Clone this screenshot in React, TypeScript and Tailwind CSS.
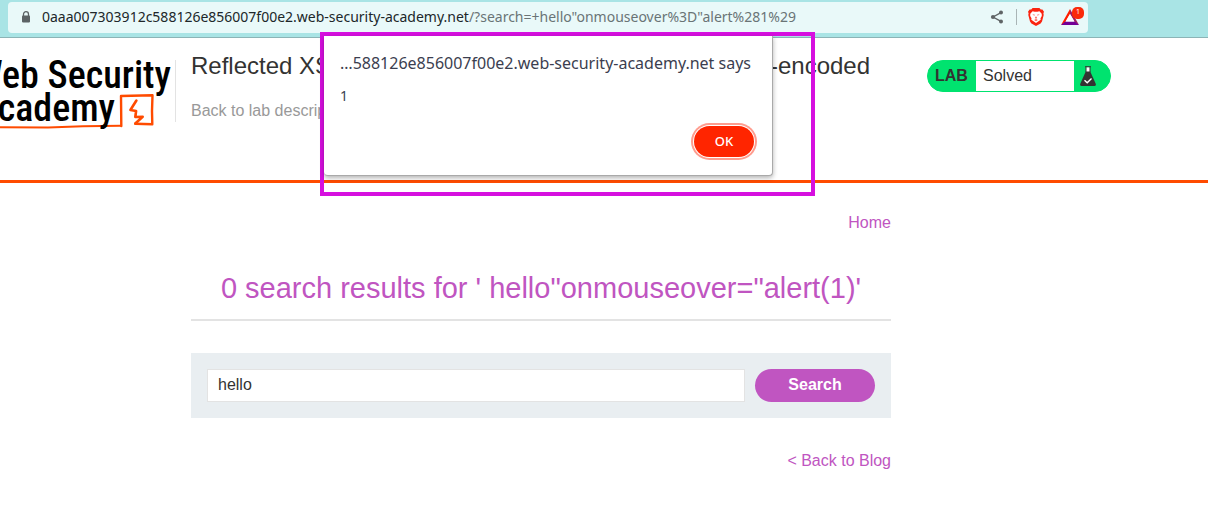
import React from "react";

function LockIcon() {
  return (
    <svg viewBox="0 0 10 12" className="h-3 w-[10px] shrink-0" aria-hidden="true">
      <path d="M2.5 5V3.2a2.5 2.5 0 0 1 5 0V5" fill="none" stroke="#5b6365" strokeWidth="1.3" />
      <rect x="1" y="4.4" width="8" height="7" rx="0.8" fill="#5b6365" />
    </svg>
  );
}

function ShareIcon() {
  return (
    <svg viewBox="0 0 14 14" className="h-[14px] w-[14px]" aria-hidden="true">
      <path d="M11 2.6 3 7l8 4.4" fill="none" stroke="#5f6466" strokeWidth="1.3" />
      <circle cx="11" cy="2.6" r="2" fill="#5f6466" />
      <circle cx="3" cy="7" r="2.1" fill="#5f6466" />
      <circle cx="11" cy="11.4" r="2" fill="#5f6466" />
    </svg>
  );
}

function LionIcon() {
  return (
    <svg viewBox="0 0 16 18" className="h-[18px] w-4" aria-hidden="true">
      <path d="M4.6 0h6.800l1.400 1.600 1.600-.1L16 3.700l-.6 1.600.3 1.600-1.700 6.600-1.400 2.100L8 18l-4.600-2.400L2 13.500.3 6.900l.3-1.600L0 3.700l1.600-2.200 1.600.1z" fill="#fb2410" />
      <path d="m4.600 3.200 2 .5h2.800l2-.5 2.300 2.500.1 2.300-1.300 2.200.2 1.500L8 15l-4.700-3.300.2-1.500L2.200 8l.1-2.300z" fill="#fff" />
      <path d="m4.300 6.200 2.700.6-.8 1zM11.700 6.200 9 6.800l.8 1zM7.700 8.400h.6l.9 1.500L8 10.700l-1.200-.8zM6.100 12 8 11.100l1.900.9L8 13.300z" fill="#fb2410" opacity=".7" />
    </svg>
  );
}

function RewardsIcon() {
  return (
    <svg viewBox="0 0 18 16" className="h-4 w-[18px]" aria-hidden="true">
      <path d="M9 0 0 16l4.200-2.800L9 5z" fill="#ff1e00" />
      <path d="M9 0v5l4.800 8.200L18 16z" fill="#9e1f63" />
      <path d="m0 16 4.200-3.600h9.600L18 16z" fill="#720096" />
      <path d="M9 5 4.600 12.500h8.800z" fill="#fff" />
    </svg>
  );
}

function FlaskIcon() {
  return (
    <svg viewBox="0 0 16 20" className="h-5 w-4" aria-hidden="true">
      <path d="M6 1.200h4V6H6z" fill="#fff" />
      <path d="M5 .7h6M6 1v5M10 1v5" fill="none" stroke="#333332" strokeWidth="1" />
      <path d="M5.700 5.500h4.600L15.800 18q.4 2-1.500 2H1.700q-1.900 0-1.500-2z" fill="#333332" />
      <path d="m4.500 14.300 2.700 2.400 4.300-4.100" fill="none" stroke="#fff" strokeWidth="1.400" />
    </svg>
  );
}

function AcademyLogo() {
  return (
    <a
      href="#academy"
      aria-label="Web Security Academy"
      className="relative block h-[72px] w-[171px] shrink-0 overflow-hidden"
    >
      <svg viewBox="0 0 171 72" className="absolute inset-0 h-[72px] w-[171px]" fill="none" stroke="#ff4b00" aria-hidden="true">
        <path d="M0 69.200 48 69.600 83 68.200 121 67.800" strokeWidth="2" />
        <path d="M121.300 68 121 38l31.500-.8-.5 15.800.3 13.200-17-.4" strokeWidth="2.400" strokeLinejoin="round" strokeLinecap="round" />
        <path d="m136.400 42.500-6 9.500 5.700 1-.8 6 7.400-.2-7.400 6.700" strokeWidth="2.600" strokeLinejoin="round" strokeLinecap="round" />
      </svg>
      <span className="relative flex flex-col items-end pt-px font-['Roboto_Condensed','Open_Sans_Condensed','Noto_Sans_Condensed','Roboto',sans-serif] text-[38px] leading-[33px] font-medium whitespace-nowrap text-black">
        <span>Web Security</span>
        <span className="pr-14">Academy</span>
      </span>
    </a>
  );
}

function AddressBar() {
  return (
    <div className="flex h-[38px] border-b border-[#8cb4b6] bg-[#a9e4e5] pt-[2px] pr-[120px] pb-1 pl-2 font-['Noto_Sans',sans-serif]">
      <div className="flex min-w-0 grow items-center rounded-[4px] bg-[#e9f9f9] pr-[5px] pb-[2px] pl-[13px]">
        <LockIcon />
        <p className="ml-[11px] grow truncate text-sm text-[#6a7476]">
          <span className="text-[#202729]">0aaa007303912c588126e856007f00e2.web-security-academy.net</span>
          /?search=+hello"onmouseover%3D"alert%281%29
        </p>
        <button type="button" aria-label="Share"><ShareIcon /></button>
        <span className="mr-[11px] ml-3 h-4 w-px bg-[#a9b5b6]" />
        <button type="button" aria-label="Shields"><LionIcon /></button>
        <button type="button" aria-label="Rewards" className="relative ml-[17px] pr-1">
          <RewardsIcon />
          <span className="absolute -top-[2px] -right-[1px] flex h-3 w-3 items-center justify-center rounded-[5px] bg-[#fb2a0a] text-[7px] text-white">1</span>
        </button>
      </div>
    </div>
  );
}

function LabStatus() {
  return (
    <div className="ml-auto flex h-8 w-[184px] shrink-0 overflow-hidden rounded-full border border-[#00e36f] bg-[#00e36f] text-base leading-[30px] text-[#333332]">
      <span className="w-12 pl-[7px] font-bold">LAB</span>
      <span className="grow bg-white pl-[7px]">Solved</span>
      <span className="flex w-9 items-center pl-[6px]"><FlaskIcon /></span>
    </div>
  );
}

function AlertDialog() {
  return (
    <div
      role="dialog"
      aria-label="Page alert"
      className="flex h-full w-[449px] flex-col rounded-b-[4px] border-r border-b border-[#a9a9a9] bg-white px-4 pt-4 pb-4 font-['Noto_Sans',sans-serif] text-[#3b3e4f] shadow-[0_2px_5px_rgba(0,0,0,0.3)]"
    >
      <p className="text-base leading-[22px] whitespace-nowrap">…588126e856007f00e2.web-security-academy.net says</p>
      <p className="mt-3 text-sm leading-5">1</p>
      <button
        type="button"
        className="mt-auto mr-[2px] mb-[2px] h-[31px] w-[60px] self-end rounded-full bg-[#ff2500] text-[13px] font-medium text-white ring-2 ring-[#ff9c8e] ring-offset-1"
      >
        OK
      </button>
    </div>
  );
}

export default function App() {
  return (
    <div className="relative min-h-screen overflow-hidden bg-white font-['Liberation_Sans',Arial,sans-serif] text-base text-[#333332]">
      <AddressBar />

      <header className="flex h-[145px] items-start border-b-[3px] border-[#ff4b00] pr-[97px]">
        <div className="pt-5">
          <AcademyLogo />
        </div>
        <div className="mt-[22px] ml-1 h-[62px] w-px bg-[#e3e3e3]" />
        <div className="ml-[15px] pt-3">
          <h2 className="text-2xl leading-8 whitespace-nowrap">
            Reflected XSS into attribute with angle brackets HTML-encoded
          </h2>
          <a href="#description" className="mt-[17px] block leading-6 text-[#999]">Back to lab description »</a>
        </div>
        <div className="ml-auto pt-[22px]">
          <LabStatus />
        </div>
      </header>

      <main className="ml-[191px] max-w-[700px] text-[#c055c1]">
        <nav className="flex justify-end pt-7 leading-6">
          <a href="#home">Home</a>
        </nav>
        <h1 className="mt-8 border-b-2 border-[#e3e3e3] pb-[10px] text-center text-[29px] leading-[42px]">
          0 search results for ' hello"onmouseover="alert(1)'
        </h1>
        <form className="mt-8 flex gap-[10px] bg-[#e9eef1] p-4" onSubmit={(event) => event.preventDefault()}>
          <input
            type="text"
            aria-label="Search the blog"
            defaultValue="hello"
            className="h-[33px] min-w-0 grow border border-[#e3e3e3] bg-white px-[10px] pb-[2px] text-[#333332] outline-none"
          />
          <button type="submit" className="h-[33px] w-[120px] rounded-full bg-[#c055c1] pb-[2px] font-bold text-white">
            Search
          </button>
        </form>
        <div className="mt-[31px] flex justify-end leading-6">
          <a href="#blog">&lt; Back to Blog</a>
        </div>
      </main>

      <div className="absolute top-8 left-[320px] h-[164px] w-[495px] border-4 border-[#d60fdf] pb-4">
        <AlertDialog />
      </div>
    </div>
  );
}
